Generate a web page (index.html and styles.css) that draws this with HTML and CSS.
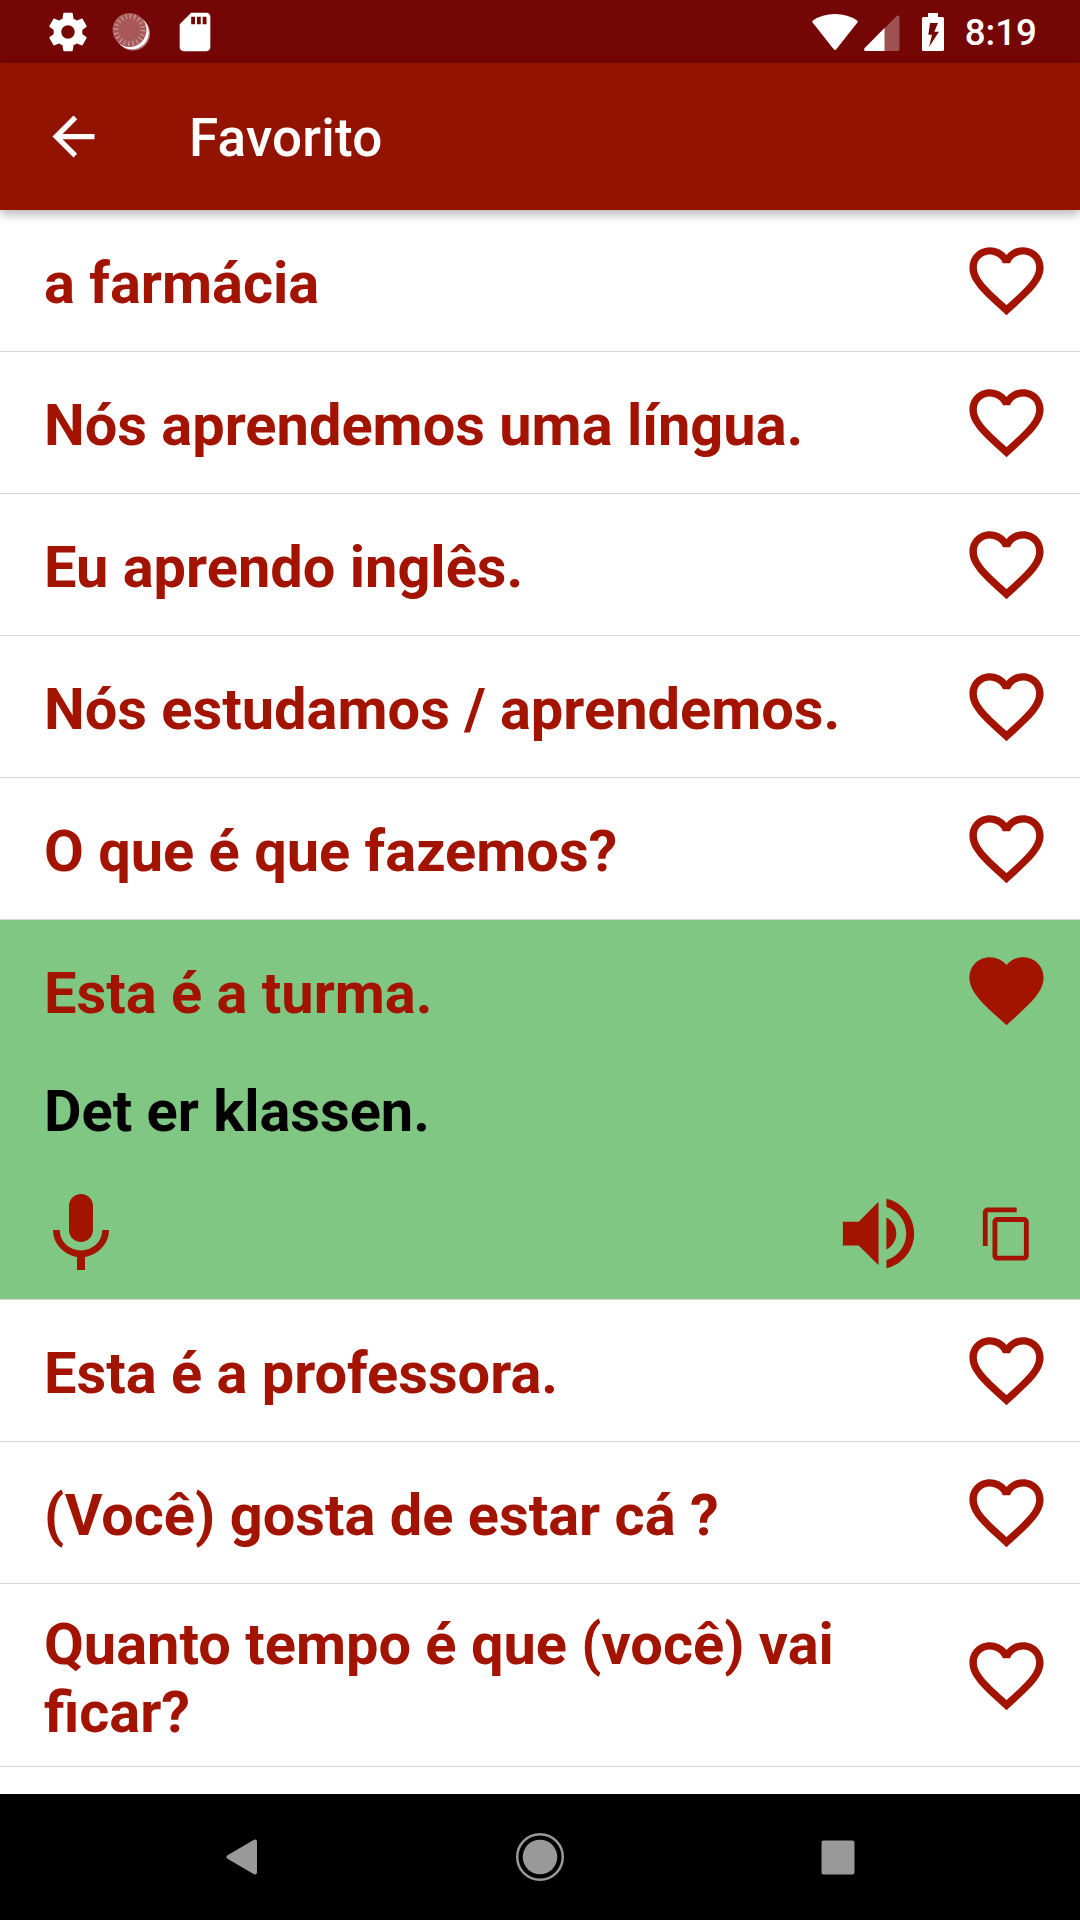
FILE: index.html
```html
<!DOCTYPE html>
<html lang="pt">

<head>
    <meta charset="utf-8">
    <meta name="viewport" content="width=device-width, initial-scale=1.0">
    <title>Favorito</title>
    <link rel="stylesheet" href="styles.css">
</head>

<body>
    <!-- shared icons -->
    <svg class="defs">
        <symbol id="heart-line" viewBox="0 0 24 24">
            <path d="M16.5 3c-1.74 0-3.41.81-4.5 2.09C10.91 3.81 9.24 3 7.5 3 4.42 3 2 5.42 2 8.5c0 3.78 3.4 6.86 8.55 11.54L12 21.35l1.45-1.32C18.6 15.36 22 12.28 22 8.5 22 5.42 19.58 3 16.5 3zm-4.4 15.55l-.1.1-.1-.1C7.14 14.24 4 11.39 4 8.5 4 6.5 5.5 5 7.5 5c1.54 0 3.04.99 3.57 2.36h1.87C13.46 5.99 14.96 5 16.5 5c2 0 3.5 1.5 3.5 3.5 0 2.89-3.14 5.74-7.9 10.05z"/>
        </symbol>
        <symbol id="heart-full" viewBox="0 0 24 24">
            <path d="M12 21.35l-1.45-1.32C5.4 15.36 2 12.28 2 8.5 2 5.42 4.42 3 7.5 3c1.74 0 3.41.81 4.5 2.09C13.09 3.81 14.76 3 16.5 3 19.58 3 22 5.42 22 8.5c0 3.78-3.4 6.86-8.55 11.54L12 21.35z"/>
        </symbol>
    </svg>

    <div class="status-bar">
        <svg class="status-icon gear" viewBox="0 0 24 24"><path d="M19.43 12.98c.04-.32.07-.64.07-.98s-.03-.66-.07-.98l2.11-1.65c.19-.15.24-.42.12-.64l-2-3.46c-.12-.22-.39-.3-.61-.22l-2.49 1c-.52-.4-1.08-.73-1.69-.98l-.38-2.65C14.46 2.18 14.25 2 14 2h-4c-.25 0-.46.18-.49.42l-.38 2.65c-.61.25-1.17.59-1.69.98l-2.49-1c-.23-.09-.49 0-.61.22l-2 3.46c-.13.22-.07.49.12.64l2.11 1.65c-.04.32-.07.65-.07.98s.03.66.07.98l-2.11 1.65c-.19.15-.24.42-.12.64l2 3.46c.12.22.39.3.61.22l2.49-1c.52.4 1.08.73 1.69.98l.38 2.65c.03.24.24.42.49.42h4c.25 0 .46-.18.49-.42l.38-2.65c.61-.25 1.17-.59 1.69-.98l2.49 1c.23.09.49 0 .61-.22l2-3.46c.12-.22.07-.49-.12-.64l-2.11-1.65zM12 15.5c-1.93 0-3.5-1.57-3.5-3.5s1.57-3.5 3.5-3.5 3.5 1.57 3.5 3.5-1.57 3.5-3.5 3.5z"/></svg>
        <svg class="status-icon sync" viewBox="0 0 46 46">
            <circle cx="24" cy="24.5" r="17" fill="#b97a7a"/>
            <circle cx="22.8" cy="23.2" r="17" fill="#fff"/>
            <circle cx="20.5" cy="21" r="17" fill="#a85858"/>
            <circle cx="20.5" cy="21" r="13.6" fill="none" stroke="#c99a9a" stroke-width="5" stroke-dasharray="1.2 3.072"/>
        </svg>
        <svg class="status-icon sd" viewBox="0 0 24 24"><path d="M18 2h-8L4.020 8 4 20c0 1.100.9 2 2 2h12c1.100 0 2-.9 2-2V4c0-1.100-.9-2-2-2zm-6 6h-2V4h2v4zm3 0h-2V4h2v4zm3 0h-2V4h2v4z"/></svg>
        <svg class="wifi" viewBox="0 0 46 38"><path d="M.6 9.500Q-.2 8.300 1 7.500Q10 1 23 1Q36 1 45 7.500Q46.200 8.300 45.400 9.500L24.500 36Q23 37.800 21.500 36z"/></svg>
        <svg class="signal" viewBox="0 0 36 36">
            <path d="M1 36Q-.5 34.500.8 33L33 .8Q35 0 35.500 2V34Q35.500 36 34 36z" opacity=".3"/>
            <path d="M1 36Q-.5 34.500.8 33L20.500 13V36z"/>
        </svg>
        <svg class="battery" viewBox="0 0 22 38"><path fill-rule="evenodd" d="M6 0H16V4H20.500Q22 4 22 5.500V36.500Q22 38 20.500 38H1.500Q0 38 0 36.500V5.500Q0 4 1.500 4H6zM8 10L6.300 21.700H10L7 34L17 18.700H12.300L16 10z"/></svg>
        <span class="clock">8:19</span>
    </div>

    <div class="app-bar">
        <svg class="back" viewBox="0 0 24 24"><path d="M20 11H7.830l5.590-5.590L12 4l-8 8 8 8 1.410-1.410L7.830 13H20v-2z"/></svg>
        <span class="title">Favorito</span>
    </div>

    <div class="list">
        <div class="item">
            <div class="phrase">a farmácia</div>
            <svg class="heart"><use href="#heart-line"/></svg>
        </div>
        <div class="item">
            <div class="phrase">Nós aprendemos uma língua.</div>
            <svg class="heart"><use href="#heart-line"/></svg>
        </div>
        <div class="item">
            <div class="phrase">Eu aprendo inglês.</div>
            <svg class="heart"><use href="#heart-line"/></svg>
        </div>
        <div class="item">
            <div class="phrase">Nós estudamos / aprendemos.</div>
            <svg class="heart"><use href="#heart-line"/></svg>
        </div>
        <div class="item">
            <div class="phrase">O que é que fazemos?</div>
            <svg class="heart"><use href="#heart-line"/></svg>
        </div>
        <div class="open">
            <div class="item">
                <div class="phrase">Esta é a turma.</div>
                <svg class="heart"><use href="#heart-full"/></svg>
            </div>
            <div class="translation">Det er klassen.</div>
            <div class="actions">
                <svg class="mic" viewBox="0 0 24 24"><path d="M12 14c1.660 0 2.990-1.340 2.990-3L15 5c0-1.660-1.340-3-3-3S9 3.340 9 5v6c0 1.660 1.340 3 3 3zm5.300-3c0 3-2.540 5.100-5.300 5.100S6.700 14 6.700 11H5c0 3.410 2.720 6.230 6 6.720V21h2v-3.280c3.280-.48 6-3.300 6-6.720h-1.700z"/></svg>
                <svg class="volume" viewBox="0 0 24 24"><path d="M3 9v6h4l5 5V4L7 9H3zm13.500 3c0-1.770-1.020-3.290-2.500-4.030v8.050c1.480-.73 2.500-2.250 2.500-4.020zM14 3.230v2.060c2.890.86 5 3.540 5 6.710s-2.110 5.850-5 6.710v2.060c4.010-.91 7-4.490 7-8.770s-2.990-7.860-7-8.770z"/></svg>
                <svg class="copy" viewBox="0 0 24 24"><path d="M16 1H4c-1.100 0-2 .9-2 2v14h2V3h12V1zm3 4H8c-1.100 0-2 .9-2 2v14c0 1.100.9 2 2 2h11c1.100 0 2-.9 2-2V7c0-1.100-.9-2-2-2zm0 16H8V7h11v14z"/></svg>
            </div>
        </div>
        <div class="item">
            <div class="phrase">Esta é a professora.</div>
            <svg class="heart"><use href="#heart-line"/></svg>
        </div>
        <div class="item">
            <div class="phrase">(Você) gosta de estar cá ?</div>
            <svg class="heart"><use href="#heart-line"/></svg>
        </div>
        <div class="item tall">
            <div class="phrase">Quanto tempo é que (você) vai ficar?</div>
            <svg class="heart"><use href="#heart-line"/></svg>
        </div>
    </div>

    <div class="nav-bar">
        <svg viewBox="0 0 60 60"><path d="M44 14.500V45.500L17.500 30z" stroke-width="4" stroke="#999" stroke-linejoin="round"/></svg>
        <svg viewBox="0 0 60 60">
            <circle cx="30" cy="30" r="17.300"/>
            <circle cx="30" cy="30" r="22.800" fill="none" stroke="#999" stroke-width="2.500"/>
        </svg>
        <svg viewBox="0 0 60 60"><rect x="13.500" y="13.500" width="33" height="34" rx="2"/></svg>
    </div>
</body>

</html>
```
FILE: styles.css
```css
* {
    box-sizing: border-box;
}

html,
body {
    height: 100%;
    margin: 0;
    padding: 0;
    overflow: hidden;
}

body {
    display: flex;
    flex-direction: column;
    width: 1080px;
    height: 1920px;
    background-color: #fff;
    font-family: Roboto, sans-serif;
}

svg {
    display: block;
    flex: none;
    fill: currentColor;
}

.defs {
    display: none;
}

.status-bar {
    display: flex;
    align-items: center;
    height: 63px;
    flex: none;
    padding: 0 43px 0 45px;
    background-color: #750606;
    color: #fff;
}

.status-icon {
    width: 46px;
    height: 46px;
}

.sync {
    margin-left: 18px;
}

.sd {
    margin-left: 17px;
}

.wifi {
    width: 46px;
    height: 38px;
    margin-left: auto;
}

.signal {
    width: 36px;
    height: 36px;
    margin: 2px 0 0 6px;
}

.battery {
    width: 22px;
    height: 38px;
    margin-left: 22px;
}

.clock {
    margin: 2px 0 0 21px;
    font-size: 36.75px;
    font-weight: 500;
}

.app-bar {
    display: flex;
    align-items: center;
    height: 147px;
    flex: none;
    padding-left: 42px;
    background-color: #921300;
    color: #fff;
    box-shadow: 0 4px 10px rgba(0, 0, 0, 0.3);
    z-index: 1;
}

.back {
    width: 63px;
    height: 63px;
}

.title {
    margin: 3px 0 0 84px;
    font-size: 53px;
    font-weight: 500;
    letter-spacing: 0.2px;
}

.list {
    flex: 1;
    overflow: hidden;
    color: #a21300;
}

.item {
    display: flex;
    align-items: center;
    height: 142px;
    padding: 0 29px 0 44px;
    border-bottom: 1px solid #d6d6d6;
}

.item.tall {
    height: 183px;
}

.phrase,
.translation {
    font-size: 57.75px;
    font-weight: 700;
    line-height: 68px;
}

.phrase {
    flex: 1;
    padding: 5px 60px 0 0;
}

.heart {
    width: 89px;
    height: 89px;
}

.open {
    height: 380px;
    background-color: #81c784;
    border-bottom: 1px solid #d6d6d6;
}

.open .item {
    height: 141px;
    border-bottom: none;
}

.translation {
    padding: 16px 44px 0;
    color: #000;
}

.actions {
    display: flex;
    align-items: center;
    height: 95px;
    margin-top: 41px;
    padding: 0 44px 0 33px;
}

.mic {
    width: 96px;
    height: 96px;
}

.volume {
    width: 95px;
    height: 95px;
    margin-left: auto;
    margin-right: 52px;
}

.copy {
    width: 58px;
    height: 58px;
}

.nav-bar {
    display: grid;
    grid-template-columns: repeat(3, 298.5px);
    justify-content: center;
    align-items: center;
    justify-items: center;
    height: 126px;
    flex: none;
    padding-right: 1px;
    background-color: #000;
    color: #999;
}

.nav-bar svg {
    width: 60px;
    height: 60px;
}
```
